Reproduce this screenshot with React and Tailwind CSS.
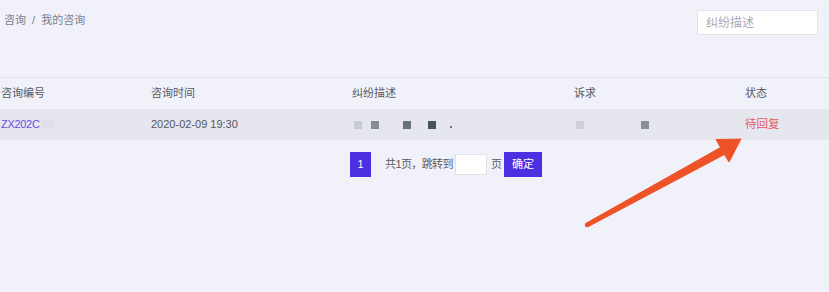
import React from 'react';

const font = { fontFamily: '"Liberation Sans", "Noto Sans CJK SC", sans-serif' };

const Sq = ({ color, className = '' }) => (
    <span className={`inline-block w-[8px] h-[8px] ${color} ${className}`} />
);

const Arrow = () => (
    <svg className="absolute left-0 top-0 pointer-events-none" width="829" height="292" viewBox="0 0 829 292">
        <polygon
            points="586,223.3 720.5,147.5 716,139.5 741,139 729,162 724.4,154.5 588,226.7"
            fill="#ef5226"
            stroke="#ef5226"
            strokeWidth="1"
            strokeLinejoin="round"
        />
        <circle cx="587" cy="225" r="2.2" fill="#ef5226" />
    </svg>
);

const App = () => {
    return (
        <div className="relative w-[829px] h-[292px] bg-[#f1f1fa] overflow-hidden text-[11px]" style={font}>
            <div className="flex items-start justify-between h-[77px]">
                <div className="pl-[4px] pt-[12px] text-[#80808a]">
                    咨询 <span className="mx-[3px]">/</span> 我的咨询
                </div>
                <div className="mt-[10px] mr-[11px] w-[121px] h-[25px] bg-white border border-[#e2e2ea] flex items-center pl-[8px] text-[#a9a9b2] text-[12px]">
                    纠纷描述
                </div>
            </div>

            <div className="border-t border-[#e1e1e9]">
                <div className="grid grid-cols-[151px_201px_222px_171px_1fr] h-[31px] items-center text-[#5a5a62]">
                    <div className="pl-[1px]">咨询编号</div>
                    <div>咨询时间</div>
                    <div>纠纷描述</div>
                    <div>诉求</div>
                    <div>状态</div>
                </div>
                <div className="grid grid-cols-[151px_201px_222px_171px_1fr] h-[31px] items-center bg-[#e6e6ef]">
                    <div className="pl-[1px] flex items-center text-[#6a4ee2] tracking-[-0.3px]">
                        ZX202C
                        <span className="inline-block w-[14px] h-[9px] bg-[#e1e1ea] ml-[1px]" />
                    </div>
                    <div className="text-[#55555d]">2020-02-09 19:30</div>
                    <div className="flex items-center pl-[2px]">
                        <Sq color="bg-[#c8cad2]" />
                        <Sq color="bg-[#858c94]" className="ml-[9px]" />
                        <Sq color="bg-[#67717a]" className="ml-[24px]" />
                        <Sq color="bg-[#48535b]" className="ml-[17px]" />
                        <span className="inline-block w-[2px] h-[2px] bg-[#777] ml-[14px] mt-[5px]" />
                    </div>
                    <div className="flex items-center pl-[2px]">
                        <Sq color="bg-[#cfd0d8]" />
                        <Sq color="bg-[#878e96]" className="ml-[57px]" />
                    </div>
                    <div className="text-[#e25b60] text-[11.5px]">待回复</div>
                </div>
            </div>

            <div className="flex items-center pl-[350px] mt-[12px] text-[#5a5a62]">
                <div className="w-[21px] h-[25px] bg-[#4c2fe0] text-white flex items-center justify-center">1</div>
                <span className="ml-[14px] tracking-[-0.6px]">共1页，跳转到</span>
                <div className="ml-[2px] w-[32px] h-[21px] bg-white border border-[#e2e2ea]" />
                <span className="ml-[4px]">页</span>
                <div className="ml-[2px] w-[38px] h-[25px] bg-[#4c2fe0] text-white flex items-center justify-center">确定</div>
            </div>

            <Arrow />
        </div>
    );
};

export default App;
